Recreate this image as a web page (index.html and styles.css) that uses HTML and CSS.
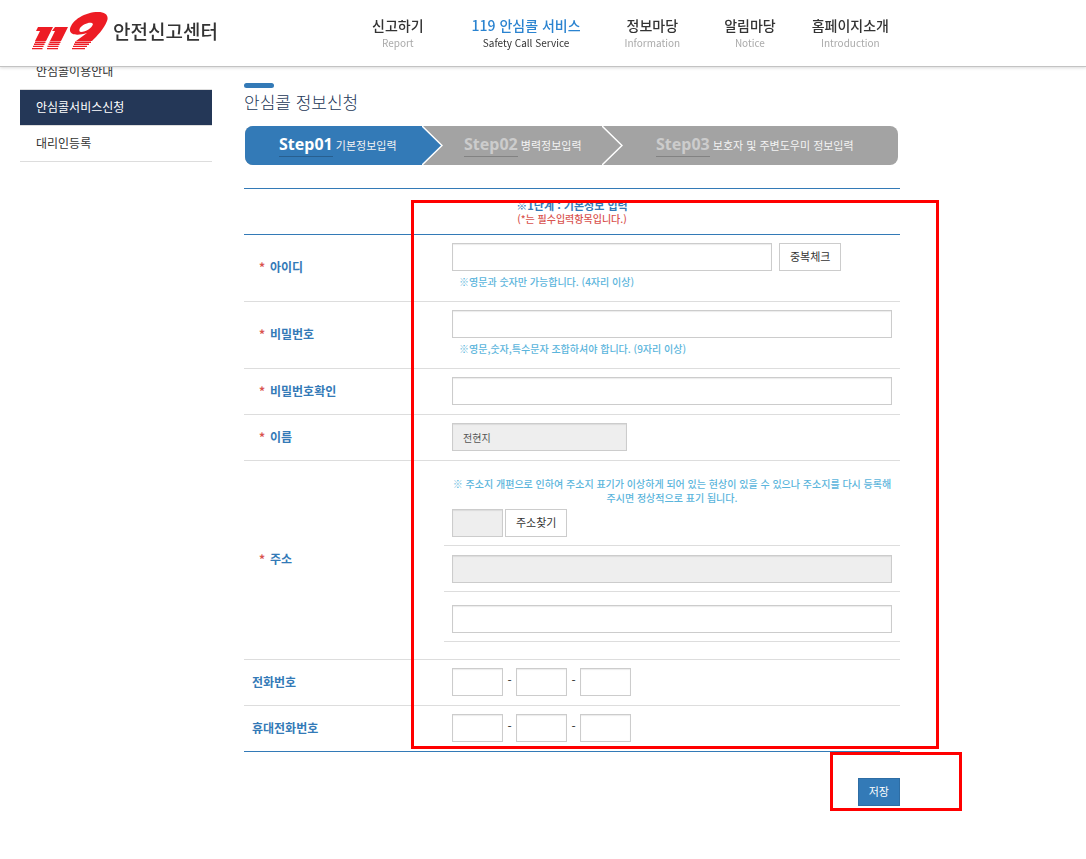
FILE: index.html
```html
<!DOCTYPE html>
<html lang="ko">
<head>
    <meta charset="UTF-8">
    <meta name="viewport" content="width=device-width, initial-scale=1.0">
    <title>안심콜 정보신청 | 119 안전신고센터</title>
    <link rel="stylesheet" href="styles.css">
</head>
<body>
    <header class="header">
        <a href="#" class="logo">
            <svg class="logo-mark" viewBox="0 0 76 38" aria-hidden="true">
                <path fill="#ed1c24" d="M6 15H21L14 29H3L8 19H4ZM23 15H36L29 29H18L23 19H20Z"/>
                <path fill="#ed1c24" fill-rule="evenodd" d="M44 29L55 21C45 24 37 23 38 17C40 8 53 0 66 0C74 0 77 4 75 9C72 17 65 24 60 29ZM49 20C54 20 60 16 61 12C59 9 51 12 48 16C47 18 47 20 49 20Z"/>
                <path stroke="#ed1c24" stroke-width="1.4" fill="none" d="M3 30.2H13.5M17.5 30.2H28.5M43 30.2H59M2 32.2H12.5M16.5 32.2H27.5M42 32.2H57M1 34.4H11.5M15.5 34.4H26.5M41 34.4H55M0 36.6H10.5M15 36.6H26M40 36.6H53"/>
            </svg>
            <span>안전신고센터</span>
        </a>
        <nav class="gnb">
            <a href="#">신고하기<small>Report</small></a>
            <a href="#" class="on">119 안심콜 서비스<small>Safety Call Service</small></a>
            <a href="#">정보마당<small>Information</small></a>
            <a href="#">알림마당<small>Notice</small></a>
            <a href="#">홈페이지소개<small>Introduction</small></a>
        </nav>
    </header>

    <div class="container">
        <nav class="lnb">
            <a href="#">안심콜이용안내</a>
            <a href="#" class="on">안심콜서비스신청</a>
            <a href="#">대리인등록</a>
        </nav>

        <main class="content">
            <h1>안심콜 정보신청</h1>

            <ol class="steps">
                <li class="on">
                    <strong>Step01</strong> 기본정보입력
                    <svg class="arrow" viewBox="0 0 21 39" aria-hidden="true"><path d="M0 0L20 19.5L0 39"/></svg>
                </li>
                <li>
                    <strong>Step02</strong> 병력정보입력
                    <svg class="arrow" viewBox="0 0 21 39" aria-hidden="true"><path d="M0 0L20 19.5L0 39"/></svg>
                </li>
                <li><strong>Step03</strong> 보호자 및 주변도우미 정보입력</li>
            </ol>

            <form class="form">
                <table>
                    <colgroup>
                        <col class="col-label">
                        <col>
                    </colgroup>
                    <thead>
                        <tr>
                            <th colspan="2">※1단계 : 기본정보 입력<span class="notice">(*는 필수입력항목입니다.)</span></th>
                        </tr>
                    </thead>
                    <tbody>
                        <tr>
                            <th class="required"><label for="userId">아이디</label></th>
                            <td>
                                <div class="field wide-gap">
                                    <input type="text" id="userId" class="input-id">
                                    <button type="button" class="btn">중복체크</button>
                                </div>
                                <p class="hint">※영문과 숫자만 가능합니다. (4자리 이상)</p>
                            </td>
                        </tr>
                        <tr>
                            <th class="required"><label for="userPw">비밀번호</label></th>
                            <td>
                                <input type="password" id="userPw">
                                <p class="hint">※영문,숫자,특수문자 조합하셔야 합니다. (9자리 이상)</p>
                            </td>
                        </tr>
                        <tr>
                            <th class="required"><label for="userPw2">비밀번호확인</label></th>
                            <td><input type="password" id="userPw2"></td>
                        </tr>
                        <tr>
                            <th class="required"><label for="userName">이름</label></th>
                            <td><input type="text" id="userName" class="input-name" value="전현지" readonly></td>
                        </tr>
                        <tr>
                            <th class="required"><label for="zip">주소</label></th>
                            <td class="address">
                                <p class="hint">※ 주소지 개편으로 인하여 주소지 표기가 이상하게 되어 있는 현상이 있을 수 있으나 주소지를 다시 등록해 주시면 정상적으로 표기 됩니다.</p>
                                <div class="address-row field">
                                    <input type="text" id="zip" class="input-short" readonly>
                                    <button type="button" class="btn">주소찾기</button>
                                </div>
                                <div class="address-row">
                                    <input type="text" aria-label="기본주소" readonly>
                                </div>
                                <div class="address-row last">
                                    <input type="text" aria-label="상세주소">
                                </div>
                            </td>
                        </tr>
                        <tr>
                            <th><label for="tel1">전화번호</label></th>
                            <td>
                                <div class="phone">
                                    <input type="text" id="tel1" class="input-short"><span>-</span>
                                    <input type="text" class="input-short" aria-label="전화번호 가운데자리"><span>-</span>
                                    <input type="text" class="input-short" aria-label="전화번호 끝자리">
                                </div>
                            </td>
                        </tr>
                        <tr>
                            <th><label for="hp1">휴대전화번호</label></th>
                            <td>
                                <div class="phone">
                                    <input type="text" id="hp1" class="input-short"><span>-</span>
                                    <input type="text" class="input-short" aria-label="휴대전화번호 가운데자리"><span>-</span>
                                    <input type="text" class="input-short" aria-label="휴대전화번호 끝자리">
                                </div>
                            </td>
                        </tr>
                    </tbody>
                </table>
                <div class="mark mark-form"></div>

                <div class="actions">
                    <button type="submit" class="btn btn-primary">저장</button>
                    <div class="mark mark-save"></div>
                </div>
            </form>
        </main>
    </div>
</body>
</html>
```

FILE: styles.css
```css
* {
    margin: 0;
    padding: 0;
    box-sizing: border-box;
}

body {
    font-family: 'Noto Sans CJK KR', 'Noto Sans', sans-serif;
    font-size: 12px;
    line-height: 20px;
    color: #333;
    background: #fff;
}

a {
    color: inherit;
    text-decoration: none;
}

/* header */
.header {
    position: fixed;
    top: 0;
    left: 0;
    z-index: 10;
    display: flex;
    width: 100%;
    height: 67px;
    padding: 11px 32px 0;
    background: #fff;
    border-bottom: 1px solid #c3c3c3;
    box-shadow: 0 1px 3px rgba(0, 0, 0, 0.15);
}

.logo {
    display: flex;
    gap: 5px;
    width: 340px;
    height: 40px;
    align-items: center;
    font-size: 19px;
    font-weight: 500;
    white-space: nowrap;
}

.logo-mark {
    width: 76px;
    height: 38px;
}

.gnb {
    display: flex;
    gap: 44px;
    padding-top: 4px;
}

.gnb a {
    font-size: 14px;
    font-weight: 500;
    line-height: 20px;
    text-align: center;
    white-space: nowrap;
}

.gnb a:first-child {
    margin-right: 4px;
}

.gnb a:last-child {
    margin-left: -8px;
}

.gnb small {
    display: block;
    font-size: 10px;
    font-weight: 400;
    line-height: 16px;
    color: #aaa;
}

.gnb .on {
    color: #2a83d0;
}

.gnb .on small {
    color: #333;
}

/* layout */
.container {
    display: grid;
    grid-template-columns: 192px minmax(0, 656px);
    gap: 32px;
    padding: 54px 20px 0;
}

.lnb a {
    display: block;
    height: 36px;
    padding-left: 16px;
    line-height: 34px;
    border-bottom: 1px solid #ddd;
}

.lnb .on {
    color: #fff;
    background: #243757;
}

.content {
    padding-top: 29px;
}

h1 {
    margin-bottom: 11px;
    font-size: 17px;
    font-weight: 300;
    line-height: 27px;
    color: #243757;
}

h1::before {
    content: '';
    display: block;
    width: 30px;
    height: 5px;
    background: #337ab7;
    border-radius: 3px;
}

/* step bar */
.steps {
    display: flex;
    height: 39px;
    margin: 0 2px 23px 1px;
    overflow: hidden;
    list-style: none;
    background: #a3a3a3;
    border-radius: 8px;
}

.steps li {
    position: relative;
    flex: 0 0 180px;
    padding: 6px 0 0 42px;
    font-size: 11px;
    line-height: 24px;
    color: #f3f3f3;
    white-space: nowrap;
}

.steps li:first-child {
    flex-basis: 177px;
    padding-left: 34px;
}

.steps li:last-child {
    flex: 1;
    padding-left: 54px;
}

.steps strong {
    display: inline-block;
    font-family: 'Noto Sans', sans-serif;
    font-size: 16px;
    color: #ccc;
    border-bottom: 1px solid #828282;
}

.steps .on {
    background: #337ab7;
}

.steps .on strong {
    color: #fff;
    border-color: #285f8f;
}

.arrow {
    position: absolute;
    top: 0;
    left: 100%;
    z-index: 1;
    width: 21px;
    height: 39px;
    fill: #a3a3a3;
    stroke: #fff;
    stroke-width: 1.5;
}

.on .arrow {
    fill: #337ab7;
}

/* form */
.form {
    position: relative;
}

table {
    width: 100%;
    border-top: 1px solid #337ab7;
    border-bottom: 1px solid #337ab7;
    border-spacing: 0;
    table-layout: fixed;
}

.col-label {
    width: 200px;
}

thead th {
    height: 45px;
    font-size: 11px;
    line-height: 14px;
    color: #337ab7;
    text-align: center;
}

.notice {
    display: block;
    font-size: 10px;
    font-weight: 500;
    color: #d9534f;
}

tbody th {
    padding: 0 0 2px 8px;
    color: #337ab7;
    text-align: left;
    border-top: 1px solid #ddd;
}

tbody td {
    padding: 8px 8px 9px;
    border-top: 1px solid #ddd;
}

tbody tr:first-child > * {
    border-top-color: #337ab7;
}

.required::before {
    content: '*';
    display: inline-block;
    width: 11px;
    margin-left: 7px;
    color: #d9534f;
}

input {
    display: block;
    width: 100%;
    height: 28px;
    padding: 0 10px;
    font-family: inherit;
    font-size: 10px;
    color: #555;
    background: #fff;
    border: 1px solid #ccc;
    box-shadow: inset 0 1px 1px rgba(0, 0, 0, 0.08);
}

input[readonly] {
    background: #eee;
}

.input-id {
    width: 320px;
}

.input-name {
    width: 175px;
}

.input-short {
    flex: none;
    width: 51px;
}

.field {
    display: flex;
    gap: 2px;
}

.wide-gap {
    gap: 7px;
}

.phone {
    display: flex;
}

.phone span {
    width: 13px;
    line-height: 24px;
    text-align: center;
}

.hint {
    padding: 4px 7px 8px;
    margin-bottom: -5px;
    font-size: 10px;
    font-weight: 500;
    line-height: 14px;
    color: #5bb5dc;
}

tbody .address {
    padding: 16px 0 17px;
}

.address .hint {
    padding: 0 4px 4px;
    margin: 0;
    text-align: center;
    word-break: keep-all;
}

.address-row {
    padding: 9px 8px 8px;
    border-bottom: 1px solid #ddd;
}

.address-row.field {
    padding-top: 0;
}

.address-row.last {
    padding-top: 13px;
}

.btn {
    flex: none;
    height: 28px;
    padding: 0 10px 2px;
    font-family: inherit;
    font-size: 11px;
    color: #333;
    background: #fff;
    border: 1px solid #ccc;
    cursor: pointer;
}

.btn-primary {
    color: #fff;
    background: #337ab7;
    border-color: #2e6da4;
}

.actions {
    position: relative;
    display: flex;
    justify-content: flex-end;
    padding: 26px 0 54px;
}

/* red guide boxes */
.mark {
    position: absolute;
    border: 3px solid #f00;
    pointer-events: none;
}

.mark-form {
    top: 12px;
    right: -39px;
    left: 167px;
    height: 549px;
}

.mark-save {
    top: 0;
    right: -62px;
    width: 132px;
    height: 59px;
}
```
